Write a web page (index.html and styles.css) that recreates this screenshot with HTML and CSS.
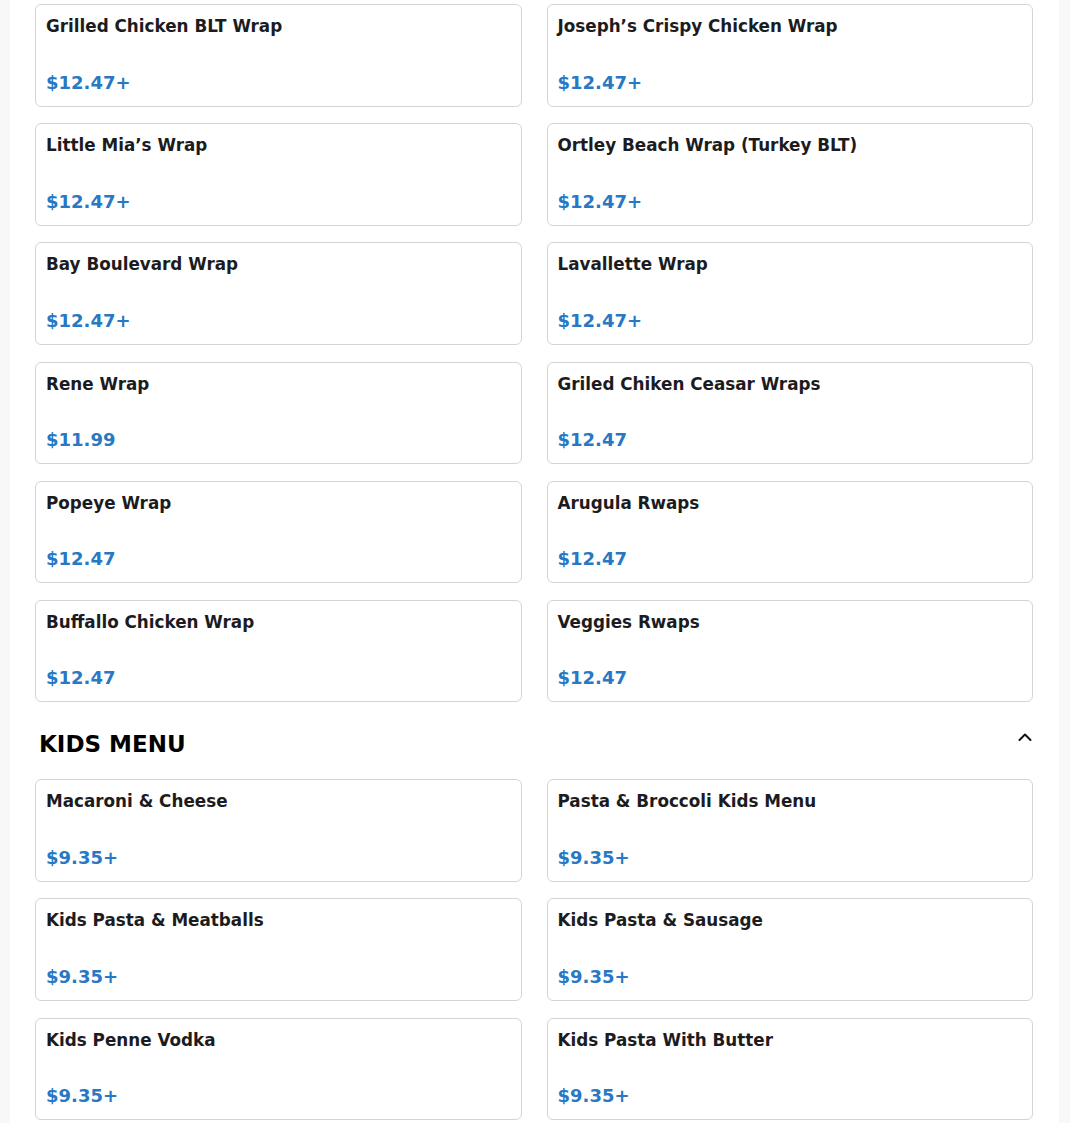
FILE: index.html
```html
<!DOCTYPE html>
<html>
<head>
<meta charset="utf-8">
<link rel="stylesheet" href="styles.css">
</head>
<body>
<div class="page">
  <div class="grid">
    <div class="card"><div class="title">Grilled Chicken BLT Wrap</div><div class="price">$12.47+</div></div>
    <div class="card"><div class="title">Joseph’s Crispy Chicken Wrap</div><div class="price">$12.47+</div></div>
    <div class="card"><div class="title">Little Mia’s Wrap</div><div class="price">$12.47+</div></div>
    <div class="card"><div class="title">Ortley Beach Wrap (Turkey BLT)</div><div class="price">$12.47+</div></div>
    <div class="card"><div class="title">Bay Boulevard Wrap</div><div class="price">$12.47+</div></div>
    <div class="card"><div class="title">Lavallette Wrap</div><div class="price">$12.47+</div></div>
    <div class="card"><div class="title">Rene Wrap</div><div class="price">$11.99</div></div>
    <div class="card"><div class="title">Griled Chiken Ceasar Wraps</div><div class="price">$12.47</div></div>
    <div class="card"><div class="title">Popeye Wrap</div><div class="price">$12.47</div></div>
    <div class="card"><div class="title">Arugula Rwaps</div><div class="price">$12.47</div></div>
    <div class="card"><div class="title">Buffallo Chicken Wrap</div><div class="price">$12.47</div></div>
    <div class="card"><div class="title">Veggies Rwaps</div><div class="price">$12.47</div></div>
  </div>
  <div class="section-head">
    <h2 class="section-title">KIDS MENU</h2>
    <svg class="chev" width="14" height="10" viewBox="0 0 14 10"><polyline points="1.5,8 7,2.5 12.5,8" fill="none" stroke="#111" stroke-width="2" stroke-linecap="round" stroke-linejoin="round"/></svg>
  </div>
  <div class="grid">
    <div class="card"><div class="title">Macaroni &amp; Cheese</div><div class="price">$9.35+</div></div>
    <div class="card"><div class="title">Pasta &amp; Broccoli Kids Menu</div><div class="price">$9.35+</div></div>
    <div class="card"><div class="title">Kids Pasta &amp; Meatballs</div><div class="price">$9.35+</div></div>
    <div class="card"><div class="title">Kids Pasta &amp; Sausage</div><div class="price">$9.35+</div></div>
    <div class="card"><div class="title">Kids Penne Vodka</div><div class="price">$9.35+</div></div>
    <div class="card"><div class="title">Kids Pasta With Butter</div><div class="price">$9.35+</div></div>
  </div>
</div>
</body>
</html>
```

FILE: styles.css
```css
html, body {
  margin: 0;
  padding: 0;
  background: #f8f8f8;
  font-family: "DejaVu Sans", Verdana, sans-serif;
}
.page {
  background: #ffffff;
  margin-left: 10px;
  width: 1049px;
  padding: 4px 26px 40px 25px;
  box-sizing: border-box;
  min-height: 1123px;
}
.grid {
  display: grid;
  grid-template-columns: 1fr 1fr;
  column-gap: 25px;
  row-gap: 16.7px;
}
.card {
  box-sizing: border-box;
  height: 102.5px;
  border: 1px solid #d4d4d4;
  border-radius: 6px;
  padding: 10px;
  display: flex;
  flex-direction: column;
  justify-content: space-between;
}
.title {
  font-weight: bold;
  font-size: 16.8px;
  color: #1c1c1e;
  padding-top: 1px;
}
.price {
  font-weight: bold;
  font-size: 18px;
  color: #2878c3;
  margin-bottom: 3px;
}
.section-head {
  display: flex;
  align-items: center;
  justify-content: space-between;
  padding: 0 1px 0 4px;
  margin: 29px 0 21.7px;
}
.section-title {
  margin: 0;
  font-size: 23px;
  font-weight: bold;
  color: #000;
}
.chev {
  display: block;
  margin-top: -14px;
}
```
